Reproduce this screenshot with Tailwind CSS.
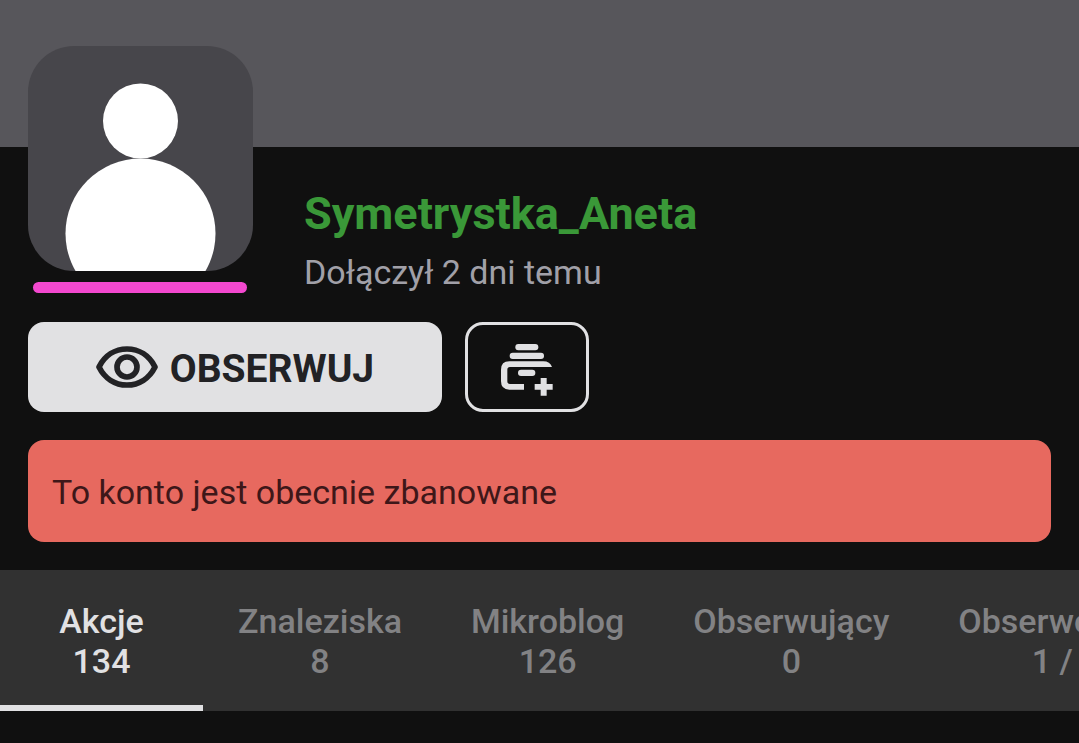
<!DOCTYPE html>
<html lang="pl">
<head>
  <meta charset="UTF-8" />
  <meta name="viewport" content="width=device-width, initial-scale=1.0" />
  <title>Symetrystka_Aneta</title>
  <script src="https://cdn.jsdelivr.net/npm/@tailwindcss/browser@4"></script>
</head>
<body class="bg-[#101010] min-h-screen overflow-x-hidden font-[Roboto,sans-serif]">
  <header class="h-[147px] bg-[#57565b]"></header>

  <main>
    <section class="px-7 -mt-[101px] flex">
      <div class="w-[225px] shrink-0">
        <svg class="block w-full rounded-[46px]" viewBox="0 0 225 225" role="img" aria-label="Avatar">
          <rect width="225" height="225" fill="#47464b" />
          <circle cx="112.5" cy="75" r="37.5" fill="#fff" />
          <circle cx="112.5" cy="187.5" r="75" fill="#fff" />
        </svg>
        <div class="mt-[11px] ml-[5px] mr-1.5 h-[11px] rounded-full bg-[#f348cf]"></div>
      </div>
      <div class="ml-[51px] pt-[140px]">
        <h1 class="text-[45px] leading-[56px] font-bold text-[#3a9838]">Symetrystka_Aneta</h1>
        <p class="mt-1 text-[34px] leading-[52px] text-[#a1a0a8]">Dołączył 2 dni temu</p>
      </div>
    </section>

    <div class="px-7 mt-6 flex gap-[23px]">
      <button class="w-[414px] h-[90px] rounded-2xl bg-[#e1e1e3] text-[#222225] flex items-center justify-center gap-3 text-[39px] font-bold">
        <svg class="w-[62px] h-[42px]" viewBox="48 92 186 126" fill="none" stroke="currentColor" stroke-width="17">
          <path stroke-linejoin="round" d="M57 155C74 121 105 101 141 101C177 101 208 121 225 155C208 189 177 209 141 209C105 209 74 189 57 155Z" />
          <circle cx="141" cy="155" r="30" />
        </svg>
        <span class="pt-1">OBSERWUJ</span>
      </button>
      <button class="w-[124px] h-[90px] pt-1.5 rounded-[18px] border-3 border-[#e1e1e3] text-[#e1e1e3] flex items-center justify-center" aria-label="Dodaj do listy">
        <svg class="w-[52px] h-[52px]" viewBox="139 87 156 156" fill="currentColor">
          <rect x="182" y="87" width="69" height="19" rx="9" />
          <rect x="165" y="113" width="103" height="19" rx="9" />
          <rect x="190" y="164" width="52" height="19" rx="9" />
          <path d="M208 224H164Q139 224 139 199V164Q139 139 164 139H266Q286 139 292 156H166Q158 156 158 164V199Q158 207 166 207H208Z" />
          <path d="M258 189H276V207H294V224H276V242H258V224H240V207H258Z" />
        </svg>
      </button>
    </div>

    <div class="mx-7 mt-7 px-6 pt-[27px] pb-[25px] rounded-2xl bg-[#e7695f] text-[34px] leading-[50px] text-[#3e1719]">
      To konto jest obecnie zbanowane
    </div>

    <nav class="mt-7 flex gap-px overflow-hidden bg-[#313131] text-[34px] leading-10 font-medium text-center text-[#828284] whitespace-nowrap">
      <a href="#" class="min-w-[203px] shrink-0 px-[34px] pt-[31px] pb-6 border-b-6 border-[#e1e1e3] text-[#e1e1e3]">Akcje<br />134</a>
      <a href="#" class="shrink-0 px-[34px] pt-[31px] pb-[30px]">Znaleziska<br />8</a>
      <a href="#" class="shrink-0 px-[34px] pt-[31px] pb-[30px]">Mikroblog<br />126</a>
      <a href="#" class="shrink-0 px-[34px] pt-[31px] pb-[30px]">Obserwujący<br />0</a>
      <a href="#" class="shrink-0 px-[34px] pt-[31px] pb-[30px]">Obserwowane<br />1 / 0</a>
    </nav>
  </main>
</body>
</html>
